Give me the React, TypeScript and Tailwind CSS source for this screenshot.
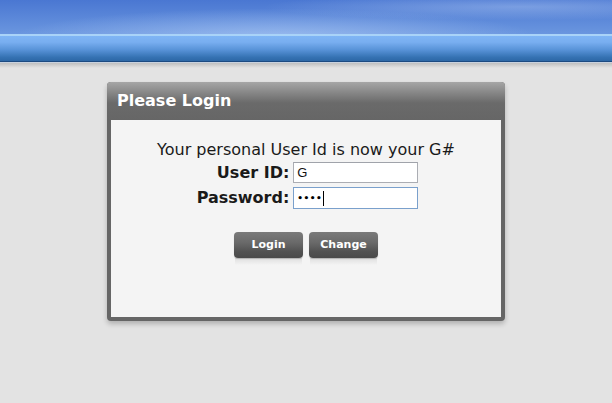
import React from "react";

export default function App() {
  const font = "font-['DejaVu_Sans','Verdana',sans-serif]";
  return (
    <div className={`min-h-[403px] w-full bg-[#e3e3e3] ${font}`}>
      {/* top banner */}
      <div className="h-[34px] bg-[radial-gradient(ellipse_at_45%_110%,rgba(190,215,250,0.55),transparent_55%),radial-gradient(ellipse_at_85%_20%,rgba(200,220,250,0.35),transparent_35%),linear-gradient(#4a77d2,#6a96df)]" />
      <div className="h-[2px] bg-[#a9d3f8]" />
      <div className="h-[25px] bg-[linear-gradient(#7fb5f5_0%,#78aef0_25%,#5893d8_55%,#3572b3_85%,#2c67a6_100%)]" />
      <div className="h-px bg-[#1c4a80]" />
      <div className="h-px bg-[#c9d2de]" />
      <div className="h-[5px] bg-[linear-gradient(#bfbfbf,#e3e3e3)]" />

      {/* login panel */}
      <div className="mx-auto mt-[14px] w-[398px] rounded-[4px] bg-[#666] shadow-[0_3px_5px_rgba(0,0,0,0.22)]">
        <div className="flex h-[38px] items-center rounded-t-[4px] bg-[linear-gradient(#a6a6a6_0%,#8a8a8a_25%,#6a6a6a_55%,#666_100%)] pl-[10px]">
          <span className="text-[16px] font-bold text-white">Please Login</span>
        </div>
        <div className="px-[4px] pb-[4px]">
          <div className="flex h-[197px] flex-col items-center bg-[#f4f4f4] pt-[21px]">
            <div className="text-[16px] leading-[18px] text-[#1a1a1a]">
              Your personal User Id is now your G#
            </div>
            <div className="mt-[3px] grid grid-cols-[auto_125px] items-center gap-x-[4px] gap-y-[4px] pl-[3px]">
              <div className="text-right text-[16px] font-bold leading-[20px] text-[#1a1a1a]">User ID:</div>
              <div className="flex h-[21px] items-center border border-[#abadb3] border-t-[#a0a3aa] bg-white pl-[3px] font-['Liberation_Sans',Arial,sans-serif] text-[13px] text-[#111]">
                G
              </div>
              <div className="text-right text-[16px] font-bold leading-[20px] text-[#1a1a1a]">Password:</div>
              <div className="flex h-[22px] items-center border border-[#7aa0cc] bg-white pl-[3px]">
                <span className="text-[9px] font-bold leading-none tracking-[0.5px] text-black">••••</span>
                <span className="ml-px h-[15px] w-px bg-black" />
              </div>
            </div>
            <div className="mt-[23px] flex gap-[6px]">
              {["Login", "Change"].map((l) => (
                <div key={l} className="flex flex-col items-center">
                  <div className="flex h-[26px] w-[69px] items-center justify-center rounded-[4px] bg-[linear-gradient(#7a7a7a_0%,#6a6a6a_40%,#525252_75%,#4a4a4a_100%)] text-[11px] font-bold text-white shadow-[0_1px_1px_rgba(0,0,0,0.2)]">
                    {l}
                  </div>
                  <div className="h-[7px] w-[67px] bg-[linear-gradient(rgba(0,0,0,0.09),rgba(0,0,0,0))]" />
                </div>
              ))}
            </div>
          </div>
        </div>
      </div>
    </div>
  );
}
